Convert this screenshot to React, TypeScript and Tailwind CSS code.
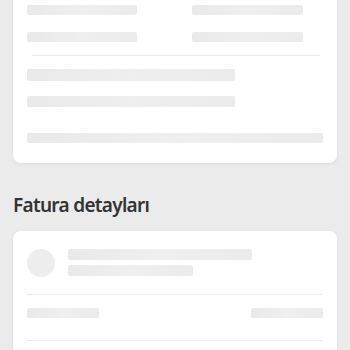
import React from 'react';

const Bar: React.FC<{ className: string }> = ({ className }) => (
  <div className={`rounded-[2px] bg-gradient-to-r from-[#e9e9e9] via-[#efefef] to-[#ebebeb] ${className}`} />
);

const App: React.FC = () => {
  return (
    <div className="h-[350px] w-[350px] overflow-hidden bg-[#ebebeb] px-[13px]" style={{ fontFamily: '"Noto Sans", "Open Sans", sans-serif' }}>
      {/* üst kart (kısmen görünüyor) */}
      <div className="-mt-[16px] rounded-b-[8px] bg-white px-[14px] pt-[21px] pb-[20px] shadow-[0_1px_4px_rgba(0,0,0,0.06)]">
        <div className="flex">
          <div className="w-[165px]"><Bar className="h-[10px] w-[110px]" /></div>
          <Bar className="h-[10px] w-[111px]" />
        </div>
        <div className="mt-[17px] flex">
          <div className="w-[165px]"><Bar className="h-[10px] w-[110px]" /></div>
          <Bar className="h-[10px] w-[111px]" />
        </div>
        <div className="mt-[13px] ml-[5px] mr-[3px] h-px bg-[#ececec]" />
        <Bar className="mt-[13px] h-[12px] w-[208px]" />
        <Bar className="mt-[15px] h-[11px] w-[208px]" />
        <Bar className="mt-[26px] h-[10px] w-[296px]" />
      </div>

      <h2 className="mt-[28px] text-[19px] font-semibold leading-[28px] tracking-[-0.7px] text-[#333333]">Fatura detayları</h2>

      <div className="mt-[12px] rounded-[8px] bg-white px-[14px] pt-[18px] shadow-[0_1px_4px_rgba(0,0,0,0.06)]">
        <div className="flex items-start">
          <div className="h-[28px] w-[28px] rounded-full bg-[#ededed]" />
          <div className="ml-[13px]">
            <Bar className="h-[11px] w-[184px]" />
            <Bar className="mt-[5px] h-[11px] w-[125px]" />
          </div>
        </div>
        <div className="mt-[17px] h-px bg-[#ececec]" />
        <div className="mt-[13px] flex justify-between">
          <Bar className="h-[10px] w-[72px]" />
          <Bar className="h-[10px] w-[72px]" />
        </div>
        <div className="mt-[22px] h-px bg-[#ececec]" />
        <div className="h-[40px]" />
      </div>
    </div>
  );
};

export default App;
